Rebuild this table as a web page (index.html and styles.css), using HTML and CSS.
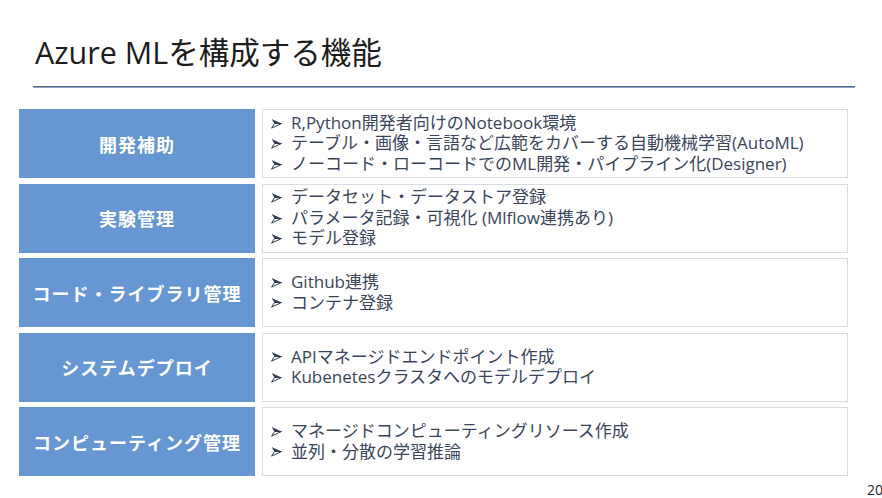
FILE: index.html
```html
<!DOCTYPE html>
<html lang="ja">
<head>
<meta charset="utf-8">
<title>Azure MLを構成する機能</title>
<link rel="stylesheet" href="styles.css">
</head>
<body>
<div class="slide">
  <h1 class="title">Azure MLを構成する機能</h1>
  <div class="rule"></div>
  <div class="rows">
    <div class="row">
      <div class="label">開発補助</div>
      <ul class="items">
        <li><svg class="arrow" viewBox="0 0 10 10"><path class="a-top" d="M0.5 0.8 L9.6 5 L3.2 5 Z"/><path class="a-bot" d="M3.2 5 L9.6 5 L0.5 9.2 Z"/></svg>R,Python開発者向けのNotebook環境</li>
        <li><svg class="arrow" viewBox="0 0 10 10"><path class="a-top" d="M0.5 0.8 L9.6 5 L3.2 5 Z"/><path class="a-bot" d="M3.2 5 L9.6 5 L0.5 9.2 Z"/></svg>テーブル・画像・言語など広範をカバーする自動機械学習(AutoML)</li>
        <li><svg class="arrow" viewBox="0 0 10 10"><path class="a-top" d="M0.5 0.8 L9.6 5 L3.2 5 Z"/><path class="a-bot" d="M3.2 5 L9.6 5 L0.5 9.2 Z"/></svg>ノーコード・ローコードでのML開発・パイプライン化(Designer)</li>
      </ul>
    </div>
    <div class="row">
      <div class="label">実験管理</div>
      <ul class="items">
        <li><svg class="arrow" viewBox="0 0 10 10"><path class="a-top" d="M0.5 0.8 L9.6 5 L3.2 5 Z"/><path class="a-bot" d="M3.2 5 L9.6 5 L0.5 9.2 Z"/></svg>データセット・データストア登録</li>
        <li><svg class="arrow" viewBox="0 0 10 10"><path class="a-top" d="M0.5 0.8 L9.6 5 L3.2 5 Z"/><path class="a-bot" d="M3.2 5 L9.6 5 L0.5 9.2 Z"/></svg>パラメータ記録・可視化 (Mlflow連携あり)</li>
        <li><svg class="arrow" viewBox="0 0 10 10"><path class="a-top" d="M0.5 0.8 L9.6 5 L3.2 5 Z"/><path class="a-bot" d="M3.2 5 L9.6 5 L0.5 9.2 Z"/></svg>モデル登録</li>
      </ul>
    </div>
    <div class="row">
      <div class="label">コード・ライブラリ管理</div>
      <ul class="items">
        <li><svg class="arrow" viewBox="0 0 10 10"><path class="a-top" d="M0.5 0.8 L9.6 5 L3.2 5 Z"/><path class="a-bot" d="M3.2 5 L9.6 5 L0.5 9.2 Z"/></svg>Github連携</li>
        <li><svg class="arrow" viewBox="0 0 10 10"><path class="a-top" d="M0.5 0.8 L9.6 5 L3.2 5 Z"/><path class="a-bot" d="M3.2 5 L9.6 5 L0.5 9.2 Z"/></svg>コンテナ登録</li>
      </ul>
    </div>
    <div class="row">
      <div class="label">システムデプロイ</div>
      <ul class="items">
        <li><svg class="arrow" viewBox="0 0 10 10"><path class="a-top" d="M0.5 0.8 L9.6 5 L3.2 5 Z"/><path class="a-bot" d="M3.2 5 L9.6 5 L0.5 9.2 Z"/></svg>APIマネージドエンドポイント作成</li>
        <li><svg class="arrow" viewBox="0 0 10 10"><path class="a-top" d="M0.5 0.8 L9.6 5 L3.2 5 Z"/><path class="a-bot" d="M3.2 5 L9.6 5 L0.5 9.2 Z"/></svg>Kubenetesクラスタへのモデルデプロイ</li>
      </ul>
    </div>
    <div class="row">
      <div class="label">コンピューティング管理</div>
      <ul class="items">
        <li><svg class="arrow" viewBox="0 0 10 10"><path class="a-top" d="M0.5 0.8 L9.6 5 L3.2 5 Z"/><path class="a-bot" d="M3.2 5 L9.6 5 L0.5 9.2 Z"/></svg>マネージドコンピューティングリソース作成</li>
        <li><svg class="arrow" viewBox="0 0 10 10"><path class="a-top" d="M0.5 0.8 L9.6 5 L3.2 5 Z"/><path class="a-bot" d="M3.2 5 L9.6 5 L0.5 9.2 Z"/></svg>並列・分散の学習推論</li>
      </ul>
    </div>
  </div>
  <div class="page-no">20</div>
</div>
</body>
</html>
```

FILE: styles.css
```css
html, body {
  margin: 0;
  padding: 0;
  background: #ffffff;
}

body {
  width: 882px;
  height: 498px;
  overflow: hidden;
  font-family: "Open Sans", "Noto Sans CJK JP", sans-serif;
}

.slide {
  position: relative;
  width: 882px;
  height: 498px;
  overflow: hidden;
}

.title {
  margin: 34px 0 0 35px;
  font-size: 30.5px;
  line-height: 36px;
  font-weight: 400;
  color: #1c1c1c;
}

.rule {
  margin: 16px 0 0 33px;
  width: 822px;
  height: 1px;
  background: #5c6470;
  border-bottom: 1px solid #8aa6cf;
}

.rows {
  margin: 21px 0 0 19px;
  width: 829px;
  display: flex;
  flex-direction: column;
  gap: 5.5px;
}

.row {
  display: grid;
  grid-template-columns: 236px 1fr;
  column-gap: 7px;
  height: 69px;
}

.label {
  background: #6697d3;
  color: #ffffff;
  font-family: "Noto Sans CJK JP", sans-serif;
  font-weight: 700;
  font-size: 18px;
  letter-spacing: 1px;
  display: flex;
  align-items: center;
  justify-content: center;
}

.items {
  margin: 0;
  padding: 0 0 0 8px;
  list-style: none;
  border: 1px solid #d9dde3;
  background: #ffffff;
  display: flex;
  flex-direction: column;
  justify-content: center;
  font-size: 17px;
  line-height: 20.5px;
  color: #3a455a;
}

.items li {
  display: flex;
  align-items: center;
  white-space: nowrap;
}

.arrow {
  width: 11px;
  height: 11px;
  margin-right: 9px;
  flex: none;
}

.a-top {
  fill: #2f3a4e;
}

.a-bot {
  fill: #ffffff;
  stroke: #2f3a4e;
  stroke-width: 0.9;
  stroke-linejoin: round;
}

.page-no {
  position: absolute;
  left: 867px;
  top: 482px;
  font-size: 14px;
  line-height: 16px;
  color: #222222;
}
```
